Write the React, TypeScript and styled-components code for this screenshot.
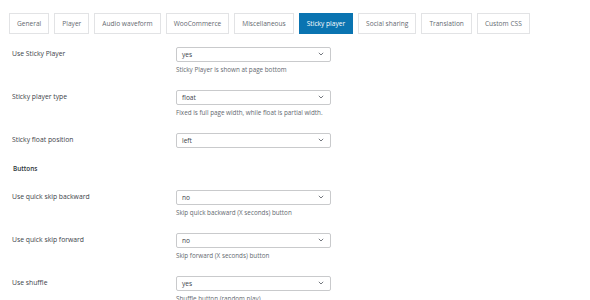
import React from "react";
import styled, { createGlobalStyle } from "styled-components";

const GlobalStyle = createGlobalStyle`
  html, body {
    margin: 0;
    padding: 0;
    background: #ffffff;
  }
  body {
    font-family: "Open Sans", "Noto Sans", "Liberation Sans", sans-serif;
    color: #1d2327;
  }
`;

type Option = {
  label: string;
  value: string;
  description?: string;
};

const tabs = [
  "General",
  "Player",
  "Audio waveform",
  "WooCommerce",
  "Miscellaneous",
  "Sticky player",
  "Social sharing",
  "Translation",
  "Custom CSS",
];

const stickyOptions: Option[] = [
  { label: "Use Sticky Player", value: "yes", description: "Sticky Player is shown at page bottom" },
  {
    label: "Sticky player type",
    value: "float",
    description: "Fixed is full page width, while float is partial width.",
  },
  { label: "Sticky float position", value: "left" },
];

const buttonOptions: Option[] = [
  { label: "Use quick skip backward", value: "no", description: "Skip quick backward (X seconds) button" },
  { label: "Use quick skip forward", value: "no", description: "Skip forward (X seconds) button" },
  { label: "Use shuffle", value: "yes", description: "Shuffle button (random play)" },
];

const Chevron = () => (
  <svg width="6" height="4" viewBox="0 0 6 4">
    <path d="M0.8 0.8 L3 3 L5.2 0.8" fill="none" stroke="#646970" strokeWidth="0.9" />
  </svg>
);

const SettingRow = ({ option }: { option: Option }) => (
  <Row>
    <Label>{option.label}</Label>
    <Field>
      <SelectBox>
        <span>{option.value}</span>
        <Chevron />
      </SelectBox>
      {option.description && <Description>{option.description}</Description>}
    </Field>
  </Row>
);

const App = () => {
  return (
    <Page>
      <GlobalStyle />
      <TabBar>
        {tabs.map((tab) => (
          <Tab key={tab} $active={tab === "Sticky player"}>
            {tab}
          </Tab>
        ))}
      </TabBar>
      <Form>
        {stickyOptions.map((o) => (
          <SettingRow key={o.label} option={o} />
        ))}
        <SectionTitle>Buttons</SectionTitle>
        {buttonOptions.map((o) => (
          <SettingRow key={o.label} option={o} />
        ))}
      </Form>
    </Page>
  );
};

const Page = styled.div`
  width: 590px;
  height: 300px;
  overflow: hidden;
  background: #ffffff;
`;

const TabBar = styled.div`
  display: flex;
  gap: 5px;
  padding: 13px 0 0 9px;
`;

const Tab = styled.div<{ $active?: boolean }>`
  height: 21px;
  box-sizing: border-box;
  padding: 0 7px;
  display: flex;
  align-items: center;
  font-size: 6.6px;
  border: 1px solid ${(p) => (p.$active ? "#0a74b1" : "#e2e3e5")};
  background: ${(p) => (p.$active ? "#0a74b1" : "#ffffff")};
  color: ${(p) => (p.$active ? "#ffffff" : "#646970")};
  white-space: nowrap;
`;

const Form = styled.div`
  padding: 4.75px 0 0 12px;
`;

const Row = styled.div`
  display: grid;
  grid-template-columns: 164px 155px;
  align-items: start;
  padding: 8.25px 0;
`;

const Label = styled.div`
  font-size: 6.8px;
  line-height: 14.5px;
  color: #3c434a;
`;

const Field = styled.div`
  display: flex;
  flex-direction: column;
`;

const SelectBox = styled.div`
  height: 14.5px;
  box-sizing: border-box;
  border: 1px solid #c9cacc;
  border-radius: 2px;
  padding: 0 6px 0 5px;
  display: flex;
  align-items: center;
  justify-content: space-between;
  font-size: 6.6px;
  color: #3c434a;
  background: #ffffff;
`;

const Description = styled.div`
  margin-top: 3px;
  font-size: 6.3px;
  line-height: 9px;
  color: #646970;
`;

const SectionTitle = styled.div`
  font-size: 6.4px;
  font-weight: 600;
  line-height: 9px;
  margin: 8px 0 9px 1px;
  color: #2c3338;
`;

export default App;
